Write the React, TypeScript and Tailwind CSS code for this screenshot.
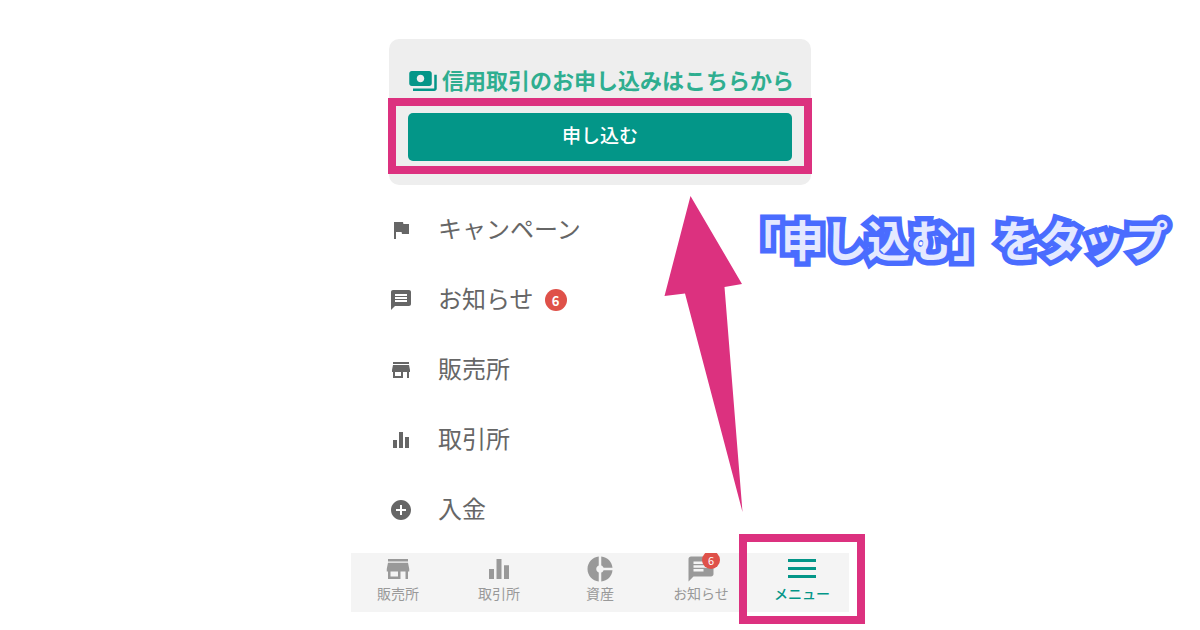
import React from 'react';
import type { IconType } from 'react-icons';
import {
  MdAddCircle,
  MdChat,
  MdDonutSmall,
  MdEqualizer,
  MdFlag,
  MdMessage,
  MdPayments,
  MdStore
} from 'react-icons/md';

interface MenuItem {
  id: string;
  label: string;
  icon: IconType;
  badge?: number;
}

const menuItems: MenuItem[] = [
  { id: 'campaign', label: 'キャンペーン', icon: MdFlag },
  { id: 'news', label: 'お知らせ', icon: MdMessage, badge: 6 },
  { id: 'shop', label: '販売所', icon: MdStore },
  { id: 'exchange', label: '取引所', icon: MdEqualizer },
  { id: 'deposit', label: '入金', icon: MdAddCircle }
];

const tabItems: MenuItem[] = [
  { id: 'shop', label: '販売所', icon: MdStore },
  { id: 'exchange', label: '取引所', icon: MdEqualizer },
  { id: 'assets', label: '資産', icon: MdDonutSmall },
  { id: 'news', label: 'お知らせ', icon: MdChat, badge: 6 }
];

const MarginCard: React.FC = () => (
  <section className="mx-[38px] rounded-[10px] bg-[#eeeeee] px-[19px] pt-[26px] pb-6">
    <h1 className="mb-4 flex h-8 items-center gap-1 whitespace-nowrap text-[22px] font-bold text-[#2fae90]">
      <MdPayments className="size-[30px] shrink-0 text-[#039688]" />
      <span className="pb-1">信用取引のお申し込みはこちらから</span>
    </h1>
    <div className="relative">
      <button type="button" className="h-12 w-full rounded-[5px] bg-[#039688] pb-1 text-[19px] font-medium text-white">
        申し込む
      </button>
      <div className="pointer-events-none absolute -inset-x-5 -top-[15px] -bottom-[13px] border-8 border-[#dc317f]" />
    </div>
  </section>
);

const MenuList: React.FC = () => (
  <ul className="mx-[38px] mt-[10px]">
    {menuItems.map(({ id, label, icon: Icon, badge }) => (
      <li key={id}>
        <a href={`#${id}`} className="flex h-[70px] items-center gap-[25px] text-2xl text-[#666666]">
          <Icon className="size-6" />
          <span className="flex items-center gap-[11px]">
            <span className="pb-1">{label}</span>
            {badge && (
              <span className="flex size-[22px] items-center justify-center rounded-full bg-[#df5149] text-[13px] leading-none font-bold text-white">
                {badge}
              </span>
            )}
          </span>
        </a>
      </li>
    ))}
  </ul>
);

const TabBar: React.FC = () => (
  <nav className="mt-2 flex justify-between bg-[#f4f4f4] px-[19px] text-sm leading-[18px] text-[#999999]">
    {tabItems.map(({ id, label, icon: Icon, badge }) => (
      <button
        key={id}
        type="button"
        className="relative flex w-14 flex-col items-center overflow-hidden whitespace-nowrap pt-px pb-[10px]"
      >
        <Icon className="size-[30px]" />
        {label}
        {badge && (
          <span className="absolute -top-[2px] right-[9px] flex size-[18px] items-center justify-center rounded-full bg-[#df5149] text-[11px] leading-none text-white">
            {badge}
          </span>
        )}
      </button>
    ))}
    <div className="relative">
      <button
        type="button"
        aria-current="page"
        className="flex w-14 flex-col items-center whitespace-nowrap pt-px pb-[10px] font-medium text-[#039688]"
      >
        <svg className="size-[30px]" viewBox="0 0 30 30" fill="currentColor" aria-hidden="true">
          <path d="M1 5h28v3H1zM1 13h28v3H1zM1 21h28v3H1z" />
        </svg>
        メニュー
      </button>
      <div className="pointer-events-none absolute -inset-x-[35px] -top-[19px] -bottom-3 border-8 border-[#dc317f]" />
    </div>
  </nav>
);

const TapHint: React.FC = () => (
  <>
    <svg
      className="pointer-events-none absolute top-[196px] left-[313px] h-[318px] w-20"
      viewBox="0 0 80 318"
      fill="#dc317f"
      aria-hidden="true"
    >
      <path d="M26.5 0 L78 88 L60.5 91 L78.5 316 L21 97.5 L0.5 100 Z" />
    </svg>
    <p className="absolute top-[208px] left-[387px] whitespace-nowrap text-[43px] leading-[60px] font-bold text-[#e4e9ff] [-webkit-text-stroke:11px_#4a6cff] [paint-order:stroke_fill]">
      「申し込む」をタップ
    </p>
  </>
);

const App: React.FC = () => (
  <div className="min-h-screen overflow-hidden bg-white font-['Noto_Sans_CJK_JP',sans-serif]">
    <main className="relative mx-auto w-full max-w-[498px] pt-[39px] pb-[18px]">
      <MarginCard />
      <MenuList />
      <TabBar />
      <TapHint />
    </main>
  </div>
);

export default App;
